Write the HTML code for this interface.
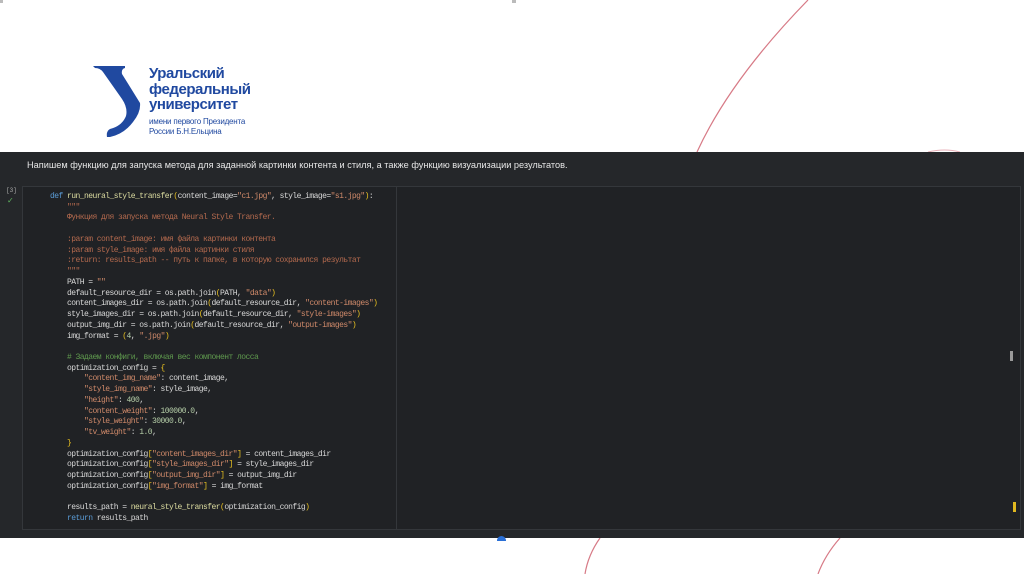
<!DOCTYPE html>
<html><head><meta charset="utf-8"><style>
body{margin:0;width:1024px;height:574px;background:#fff;position:relative;overflow:hidden;font-family:"Liberation Sans",sans-serif}
.dark{position:absolute;left:0;top:152px;width:1024px;height:386px;background:#25272a}
.hd{position:absolute;left:27px;top:160px;font-size:9.2px;color:#e6e6e6}
.cell{position:absolute;left:22px;top:186px;width:999px;height:344px;background:#202225;border:1px solid #34373b;box-sizing:border-box}
.div{position:absolute;left:396px;top:186px;width:1px;height:344px;background:#34373b}
pre{position:absolute;left:50px;top:192px;margin:0;font-family:"Liberation Mono",monospace;font-size:8px;letter-spacing:-0.55px;line-height:10.73px;color:#d8d8d8}
.k{color:#5a9bd5}.f{color:#dcdca0}.s{color:#d08a6a}.d{color:#b46a4e}.c{color:#5f9a4e}.b{color:#e8c020}.n{color:#b5cea8}
.logo{position:absolute;left:149px;top:66px;color:#2049a0;font-weight:bold;font-size:15px;letter-spacing:-0.45px;line-height:15.5px}
.logo2{position:absolute;left:149px;top:117px;color:#2049a0;font-size:8px;letter-spacing:-0.2px;line-height:9.5px}
</style></head><body>
<svg style="position:absolute;left:0;top:0" width="1024" height="574">
<path d="M93,66 L125,66 L125,68 Q121,69 122,74 L140,103 Q141,112 133,122 Q124,134 110,137 L107,137 Q106,131 110,129 Q122,126 126,116 Q128,108 122,99 L103,72 Q100,68 95,68 Z" fill="#2049a0"/>
<path d="M808,0 Q730,80 697,152" stroke="#d77a86" stroke-width="1.2" fill="none"/>
<path d="M600,538 Q588,555 585,574" stroke="#d77a86" stroke-width="1.2" fill="none"/>
<path d="M840,538 Q825,555 818,574" stroke="#d77a86" stroke-width="1.2" fill="none"/>
<path d="M928,152 Q945,148 960,152" stroke="#e8b0b8" stroke-width="1" fill="none"/>
<rect x="0" y="0" width="3" height="3" fill="#bbb"/><rect x="512" y="0" width="4" height="3" fill="#bbb"/>
</svg>
<div class="logo">Уральский<br>федеральный<br>университет</div>
<div class="logo2">имени первого Президента<br>России Б.Н.Ельцина</div>
<div class="dark"></div>
<div class="hd">Напишем функцию для запуска метода для заданной картинки контента и стиля, а также функцию визуализации результатов.</div>
<div style="position:absolute;left:6px;top:187px;font-size:6px;color:#aaa;font-family:'Liberation Mono',monospace">[3]</div>
<div style="position:absolute;left:7px;top:196px;font-size:8px;color:#5fb35f">✓</div>
<div class="cell"></div><div class="div"></div>
<div style="position:absolute;left:1010px;top:351px;width:3px;height:10px;background:#9a9a9a"></div>
<div style="position:absolute;left:1013px;top:502px;width:3px;height:10px;background:#e0b820"></div>
<pre><span class="k">def</span> <span class="f">run_neural_style_transfer</span><span class="b">(</span>content_image=<span class="s">"c1.jpg"</span>, style_image=<span class="s">"s1.jpg"</span><span class="b">)</span>:
    <span class="d">"""</span>
    <span class="d">Функция для запуска метода Neural Style Transfer.</span>

    <span class="d">:param content_image: имя файла картинки контента</span>
    <span class="d">:param style_image: имя файла картинки стиля</span>
    <span class="d">:return: results_path -- путь к папке, в которую сохранился результат</span>
    <span class="d">"""</span>
    PATH = <span class="s">""</span>
    default_resource_dir = os.path.join<span class="b">(</span>PATH, <span class="s">"data"</span><span class="b">)</span>
    content_images_dir = os.path.join<span class="b">(</span>default_resource_dir, <span class="s">"content-images"</span><span class="b">)</span>
    style_images_dir = os.path.join<span class="b">(</span>default_resource_dir, <span class="s">"style-images"</span><span class="b">)</span>
    output_img_dir = os.path.join<span class="b">(</span>default_resource_dir, <span class="s">"output-images"</span><span class="b">)</span>
    img_format = <span class="b">(</span><span class="n">4</span>, <span class="s">".jpg"</span><span class="b">)</span>

    <span class="c"># Задаем конфиги, включая вес компонент лосса</span>
    optimization_config = <span class="b">{</span>
        <span class="s">"content_img_name"</span>: content_image,
        <span class="s">"style_img_name"</span>: style_image,
        <span class="s">"height"</span>: <span class="n">400</span>,
        <span class="s">"content_weight"</span>: <span class="n">100000.0</span>,
        <span class="s">"style_weight"</span>: <span class="n">30000.0</span>,
        <span class="s">"tv_weight"</span>: <span class="n">1.0</span>,
    <span class="b">}</span>
    optimization_config<span class="b">[</span><span class="s">"content_images_dir"</span><span class="b">]</span> = content_images_dir
    optimization_config<span class="b">[</span><span class="s">"style_images_dir"</span><span class="b">]</span> = style_images_dir
    optimization_config<span class="b">[</span><span class="s">"output_img_dir"</span><span class="b">]</span> = output_img_dir
    optimization_config<span class="b">[</span><span class="s">"img_format"</span><span class="b">]</span> = img_format

    results_path = <span class="f">neural_style_transfer</span><span class="b">(</span>optimization_config<span class="b">)</span>
    <span class="k">return</span> results_path</pre>
<div style="position:absolute;left:497px;top:536px;width:9px;height:5px;border-radius:5px 5px 0 0;background:#2a6fd6"></div>
</body></html>
